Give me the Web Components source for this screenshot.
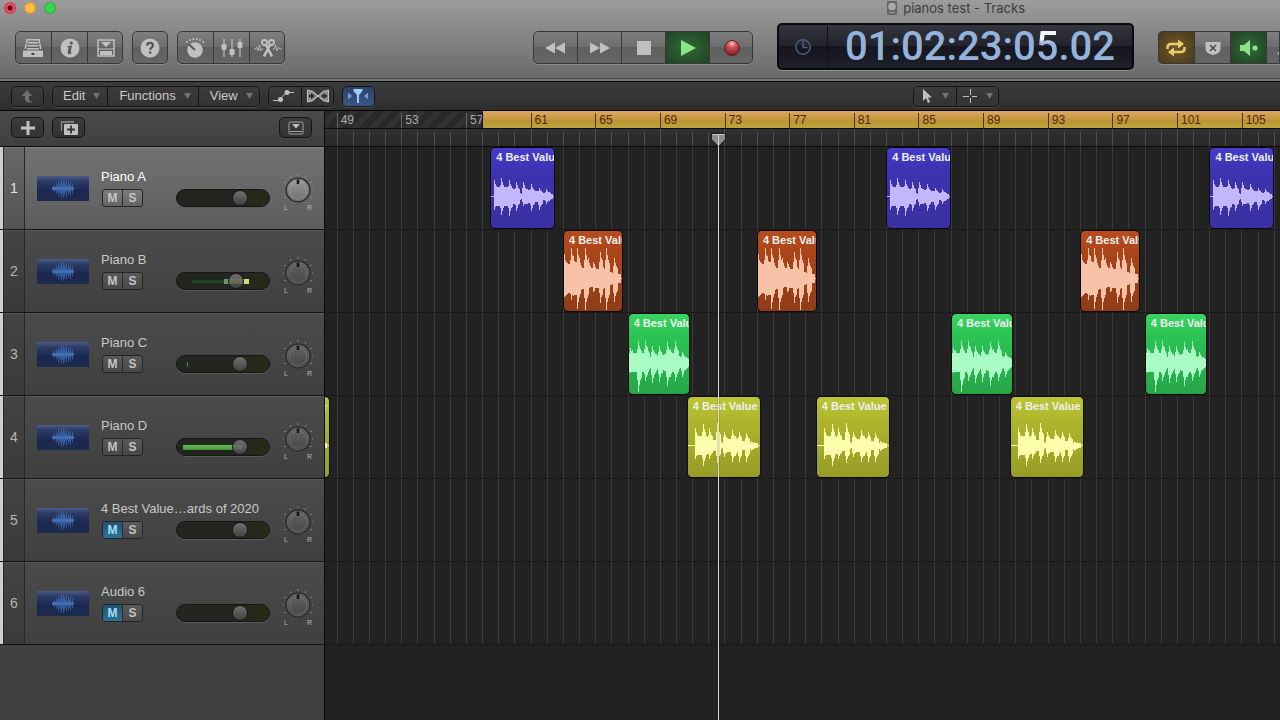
<!DOCTYPE html>
<html lang="en">
<head>
<meta charset="utf-8">
<meta name="viewport" content="width=device-width, initial-scale=1">
<title>pianos test - Tracks</title>
<style>
  html, body {
    margin: 0;
    height: 100%;
    background: #222;
    overflow: hidden;
  }
</style>
</head>
<body>
<daw-window></daw-window>

<script>
const ICONS = {
  library: [22, 20, `<path fill="currentColor" d="M4 1h14v1.500H4zM4 2h1.500v3H4zM16.500 2H18v3h-1.500zM6 4h10v1.500H6zM3.500 5.500H5L4 11H2.500zM17 5.500h1.500l1 5.500H18zM5.500 7h11v1.500h-11zM5 10h12v1.500H5zM1 12.500h20V19H1z"/><path fill="#4a4a4a" d="M9.500 15h3v2h-3z"/>`],
  info: [20, 20, `<circle cx="10" cy="10" r="9.5" fill="currentColor"/><circle cx="11.3" cy="5" r="1.6" fill="#555"/><path fill="#555" d="M7 8.2 12 7.6 10.6 14q-.2 1 .9.2l.5.5q-3.7 3-4.4.2l1.1-5.3q0-.7-1.6-.6z"/>`],
  inbox: [20, 20, `<path fill="none" stroke="currentColor" stroke-width="1.500" d="M2 2h16v16H2z"/><path fill="currentColor" d="M5 4h10l-5 5zM4 13h12v4H4z"/><path stroke="currentColor" stroke-width="1.200" d="M2 11h16"/>`],
  help: [20, 20, `<circle cx="10" cy="10" r="9.500" fill="currentColor"/><path fill="none" stroke="#555" stroke-width="2.200" d="M7 7.600q.2-2.800 3-2.800 3 0 3 2.400 0 1.400-1.500 2.300Q10.200 10.300 10.200 12"/><path fill="#555" d="M9 13.500h2.400v2.300H9z"/>`],
  dial: [22, 22, `<circle cx="11" cy="13" r="7.800" fill="currentColor"/><path stroke="#555" stroke-width="1.800" d="m5 7.500 6 5.500"/><g fill="currentColor"><circle cx="3" cy="5" r="1"/><circle cx="6" cy="3" r="1"/><circle cx="9.300" cy="2" r="1"/><circle cx="12.700" cy="2" r="1"/><circle cx="16" cy="3" r="1"/><circle cx="19" cy="5" r="1"/></g>`],
  mixer: [22, 20, `<path stroke="currentColor" stroke-width="1.200" d="M3 1v18M11 1v18M19 1v18"/><g fill="currentColor"><rect x=".5" y="6" width="5" height="6" rx="1"/><rect x="8.500" y="11" width="5" height="6" rx="1"/><rect x="16.500" y="4" width="5" height="6" rx="1"/></g>`],
  scissors: [30, 20, `<g fill="none" stroke="currentColor"><g stroke-width="1.800"><circle cx="11.500" cy="4.500" r="2.500"/><circle cx="18.500" cy="4.500" r="2.500"/></g><path stroke-width="2.600" d="m12.800 6.500 6.200 12M17.200 6.500l-6.200 12"/><path stroke-width=".9" d="M1 11h1.500l1-2 1.500 4L6.500 7l1 6 1-2h2M19.500 11h2l1-4 1.500 6 1.500-4 1 2H29"/></g>`],
  rewind: [22, 14, `<path fill="currentColor" d="M11 1.500v11L1 7zM21 1.500v11L11 7z"/>`],
  forward: [22, 14, `<path fill="currentColor" d="M1 1.500v11L11 7zM11 1.500v11L21 7z"/>`],
  stop: [14, 14, `<path fill="currentColor" d="M0 0h14v14H0z"/>`],
  play: [16, 16, `<path fill="currentColor" d="M1 0v16l15-8z"/>`],
  record: [18, 18, `<defs><radialGradient id="r" cx=".5" cy=".2" r=".8"><stop stop-color="#ffc4c4"/><stop offset=".35" stop-color="#cc545c"/><stop offset="1" stop-color="#7c1a22"/></radialGradient></defs><circle cx="9" cy="9" r="7.500" fill="url(#r)" stroke="#5a2226"/>`],
  cycle: [24, 20, `<g fill="none" stroke="currentColor" stroke-width="2.400"><path d="M3.500 11V9.500Q3.500 6 7 6h8M20.500 9v1.500q0 3.500-3.500 3.500H9"/></g><path fill="currentColor" d="m14 1.500 6 4.500-6 4.500zM10 9.500 4 14l6 4.500z"/>`],
  replace: [18, 16, `<path fill="currentColor" d="M1.500 2h15v7q0 4-7.500 6-7.500-2-7.500-6z"/><path stroke="#4a4a4a" stroke-width="1.600" d="m6 5 6 6m0-6-6 6"/>`],
  speaker: [20, 18, `<path fill="currentColor" d="M1 6h4l6-5v16l-6-5H1z"/><circle cx="16" cy="9" r="2.600" fill="currentColor"/>`],
  tuner: [18, 18, `<path stroke="currentColor" stroke-width="2" fill="none" d="m2 15 8-8 2 4 4-6"/>`],
  clock: [18, 18, `<g fill="none" stroke="currentColor" stroke-width="1.500"><circle cx="9" cy="9" r="7.200"/><path d="M9 3v6.500h4.500"/></g>`],
  up: [14, 14, `<path fill="currentColor" d="m6 1 5 6H8v3q0 2 3 2.500v1Q4 14 4 10V7H1z"/>`],
  automation: [24, 16, `<g fill="none" stroke="currentColor"><path d="M1 12.500h6M17 4.500h5M7 12l8-8"/></g><circle cx="8.500" cy="11.500" r="2.500" fill="currentColor"/><circle cx="15" cy="4.500" r="2.500" fill="currentColor"/>`],
  flex: [24, 16, `<path fill="#8f8f8f" d="M1 2q6 0 11 6-5 6-11 6zM23 2q-6 0-11 6 5 6 11 6z"/><path fill="none" stroke="currentColor" d="M1.500 2q6 0 10.500 6 4.500 6 10.500 6V2Q16.500 2 12 8q-4.500 6-10.500 6z"/><path fill="#2c2c2c" d="M3 6.500h1v3H3zM5 5l4 3-4 3V9H4V7h1zM20 6.500h1v3h-1zM19 5l-4 3 4 3V9h1V7h-1z"/>`],
  catch: [22, 16, `<path fill="#9ecbff" d="M6.500 1h9v2L12 7v8h-2V7L6.500 3z"/><path fill="#7399d6" d="m1 4.500 4 3.500-4 3.500zM21 4.500 17 8l4 3.500z"/>`],
  pointer: [12, 16, `<path fill="currentColor" d="M2 1v12l3-3 2 5 2.200-1L7 9.500h4z"/>`],
  cross: [14, 14, `<path stroke="currentColor" d="M7.500 0v6M7.500 9v5M0 7.500h6M9 7.500h5"/>`],
  plus: [14, 14, `<path fill="currentColor" d="M5.500 0h3v5.500H14v3H8.500V14h-3V8.500H0v-3h5.500z"/>`],
  duplicate: [20, 16, `<path fill="none" stroke="#909090" stroke-width="1.300" d="M2.500 11V2H15"/><rect x="5" y="4" width="14" height="11" rx="1" fill="currentColor"/><path stroke="#333" stroke-width="1.800" d="M12 5.500v8M8 9.500h8"/>`],
  panel: [16, 14, `<rect x="1" y="1" width="14" height="12" rx="1" fill="none" stroke="#a0a0a0"/><path fill="currentColor" d="M4 3h8L8 7.500z"/><path stroke="#a0a0a0" d="M2 10.500h12"/>`],
  document: [12, 16, `<rect x="1" y="1" width="10" height="14" rx="1" fill="#666"/><circle cx="6" cy="6.500" r="3.800" fill="#a8a8a8"/><path stroke="#999" d="M3 12.500h6"/>`],
  arrow: [7, 8, `<path fill="currentColor" d="M0 1h7L3.500 7z"/>`],
};

function icon(name) {
  const [w, h, body] = ICONS[name];
  return `<svg width="${w}" height="${h}" viewBox="0 0 ${w} ${h}" aria-hidden="true">${body}</svg>`;
}

// the part of the song that is in view, counted in bars
const VIEW = { start: 48.276, length: 59.086 };
const percent = (bars) => `${(bars / VIEW.length) * 100}%`;
const barToX = (bar) => percent(bar - VIEW.start);

const SOUNDS = {
  blue: {
    length: 4, mid: 48, width: 64,
    body: [[0, 0], [2, 0], [3, 9], [12, 9], [20, 8], [28, 5], [32, 1], [34, 7], [46, 5], [55, 3], [63, 0]],
    peaks: [[3, 16, 13], [10, 18, 18], [18, 16, 19], [26, 14, 14], [33, 14, 9], [41, 12, 14], [49, 8, 13], [56, 7, 7], [60, 3, 3]],
  },
  orange: {
    length: 3.7, mid: 47, width: 60,
    body: [[0, 18], [4, 14], [12, 16], [18, 10], [28, 8], [34, 9], [42, 9], [50, 5], [59, 4]],
    peaks: [[0, 24, 18], [7, 30, 21], [9, 22, 17], [14, 30, 30], [16, 20, 18], [22, 30, 31], [25, 20, 12], [30, 16, 13], [31, 14, 12], [37, 26, 24], [39, 18, 16], [44, 30, 31], [52, 20, 23]],
  },
  green: {
    length: 3.87, mid: 48, width: 62,
    body: [[0, 9], [8, 9], [18, 9], [23, 4], [28, 3], [34, 7], [42, 9], [48, 8], [54, 3], [61, 2]],
    peaks: [[1, 14, 10], [3, 12, 9], [9, 21, 29], [16, 21, 18], [18, 15, 12], [24, 16, 20], [28, 8, 8], [31, 16, 19], [39, 20, 23], [42, 13, 14], [47, 21, 18], [54, 10, 14], [58, 5, 6]],
  },
  yellow: {
    length: 4.58, mid: 48, width: 74,
    body: [[0, 0], [6, 0], [7, 9], [18, 9], [27, 5], [33, 3], [36, 2], [40, 6], [50, 6], [57, 4], [62, 2], [72, 0]],
    peaks: [[7, 17, 13], [15, 21, 20], [22, 17, 13], [30, 22, 17], [37, 13, 11], [45, 15, 16], [48, 9, 10], [52, 13, 16], [60, 12, 16], [65, 4, 5], [68, 3, 3]],
  },
};

function wavePath({ body, peaks, mid, width }) {
  const fade = { "-1": 0.6, 0: 1, 1: 0.75, 2: 0.6, 3: 0.5 };
  const level = (x, side) => {
    const next = Math.max(1, body.findIndex(([bx]) => bx >= x));
    const [x0, y0] = body[next - 1];
    const [x1, y1] = body[next];
    const base = y0 + ((y1 - y0) * (x - x0)) / (x1 - x0);
    if (base <= 0) return 0;
    const spikes = peaks.map((p) => (fade[x - p[0]] || 0) * p[side]);
    return Math.round(Math.max(base, ...spikes));
  };
  let d = "";
  for (let x = 0; x < body[body.length - 1][0]; x++) {
    const up = level(x, 1);
    const down = level(x, 2);
    d += `M${x} ${mid - up}h1v${up + down + 1}h-1z`;
  }
  return `${d}M0 ${mid}h${width}v1H0z`;
}

class IconButton extends HTMLElement {
  constructor() {
    super();
    this.attachShadow({ mode: "open" });
  }

  static get styles() {
    return /* css */`
      :host {
        display: flex;
        box-sizing: border-box;
        width: var(--button-width, 36px);
        flex: none;
        color: var(--icon-color, #c0c0c0);
      }

      :host([tone="green"]) {
        color: #8be584;
        --face: radial-gradient(#326a38, #1f4023);
      }

      :host([tone="gold"]) {
        color: #f0cd69;
        --face: radial-gradient(#70592a, #46381b);
      }

      :host([tone="blue"]) {
        --face: linear-gradient(#2b4266, #3b5785);
      }

      :host([dim]) {
        color: #707070;
      }

      button {
        display: flex;
        align-items: center;
        justify-content: center;
        flex: 1;
        min-width: 0;
        padding: 0;
        border: 0;
        color: inherit;
        background: var(--face, none);
      }

      svg {
        flex: none;
      }
    `;
  }

  connectedCallback() {
    const more = this.hasAttribute("menu") ? `<svg width="16" height="8" viewBox="-9 0 16 8"><path fill="#727272" d="M0 1h7L3.500 7z"/></svg>` : "";
    this.shadowRoot.innerHTML = /* html */`
    <style>${IconButton.styles}</style>
    <button type="button" aria-label="${this.getAttribute("label")}">${icon(this.getAttribute("icon"))}${more}</button>`;
  }
}

customElements.define("icon-button", IconButton);

class MenuButton extends HTMLElement {
  constructor() {
    super();
    this.attachShadow({ mode: "open" });
  }

  connectedCallback() {
    this.shadowRoot.innerHTML = /* html */`
    <style>
      :host {
        display: flex;
      }

      button {
        display: flex;
        align-items: center;
        gap: 8px;
        padding: 0 7px 0 11px;
        border: 0;
        background: none;
        color: #cacaca;
        font: 13px/18px "Liberation Sans", Arial, sans-serif;
      }

      svg {
        color: #727272;
      }
    </style>
    <button type="button"><slot></slot>${icon("arrow")}</button>`;
  }
}

customElements.define("menu-button", MenuButton);

class ControlGroup extends HTMLElement {
  constructor() {
    super();
    this.attachShadow({ mode: "open" });
  }

  connectedCallback() {
    this.shadowRoot.innerHTML = /* html */`
    <style>
      :host {
        display: flex;
        position: relative;
        flex: none;
        box-sizing: border-box;
        height: 33px;
        border-radius: 5px;
        overflow: hidden;
        background: linear-gradient(#808080, #6c6c6c 50%, #606060 50%, #666);
        box-shadow: 0 1px 0 #8a8a8a;
        --divider: #383838;
      }

      /* the frame is drawn over the faces of the buttons */
      :host::after {
        content: "";
        position: absolute;
        inset: 0;
        border: 1px solid var(--divider);
        border-radius: inherit;
        pointer-events: none;
      }

      :host([small]) {
        height: 21px;
        background: linear-gradient(#3c3c3c, #323232);
        box-shadow: 0 1px 0 #4a4a4a;
        --divider: #151515;
      }

      ::slotted(:not(:first-child)) {
        border-left: 1px solid var(--divider);
      }
    </style>
    <slot></slot>`;
  }
}

customElements.define("control-group", ControlGroup);

class TitleBar extends HTMLElement {
  constructor() {
    super();
    this.attachShadow({ mode: "open" });
  }

  connectedCallback() {
    this.shadowRoot.innerHTML = /* html */`
    <style>
      :host {
        display: flex;
        align-items: center;
        gap: 8px;
        height: 16px;
        padding: 0 255px 0 4px;
        color: #3c3c3c;
        font: 13px/16px Inter, Roboto, sans-serif;
      }

      button {
        box-sizing: border-box;
        width: 12px;
        height: 12px;
        padding: 0;
        border: 1px solid #00000030;
        border-radius: 50%;
        background: var(--light);
      }

      h1 {
        display: flex;
        align-items: center;
        gap: 5px;
        margin: 0 0 0 auto;
        font: inherit;
      }
    </style>
    <button type="button" aria-label="Close" style="--light: radial-gradient(#4d0d12 2px, #ee4b5a 3px)"></button>
    <button type="button" aria-label="Minimise" style="--light: #fdbc40"></button>
    <button type="button" aria-label="Zoom" style="--light: #35d74b"></button>
    <h1>${icon("document")}<slot></slot></h1>`;
  }
}

customElements.define("title-bar", TitleBar);

class LcdDisplay extends HTMLElement {
  constructor() {
    super();
    this.attachShadow({ mode: "open" });
  }

  static get styles() {
    return /* css */`
      :host {
        display: flex;
        flex: none;
        box-sizing: border-box;
        width: 357px;
        height: 47px;
        border: 2px solid #0a0a0c;
        border-radius: 5px;
        background: linear-gradient(#35353d, #22222c 50%, #15151e 50%, #20202a);
        box-shadow: 0 1px 0 #909090;
      }

      .mode {
        display: flex;
        align-items: center;
        justify-content: center;
        width: 49px;
        padding: 0;
        border: 0;
        border-right: 1px solid #12121a;
        background: none;
        color: #476082;
      }

      time {
        flex: 1;
        color: #93b3dc;
        text-align: center;
        font: 500 40px/44px Roboto, "Liberation Sans", sans-serif;
      }

      .fresh {
        color: transparent;
        background: linear-gradient(#f2f8ff 16px, #93b3dc 20px);
        background-clip: text;
      }
    `;
  }

  connectedCallback() {
    this.shadowRoot.innerHTML = /* html */`
    <style>${LcdDisplay.styles}</style>
    <button class="mode" type="button" aria-label="Display mode">${icon("clock")}</button>
    <time>01:02:23:0<span class="fresh">5</span>.02</time>`;
  }
}

customElements.define("lcd-display", LcdDisplay);

class VolumeFader extends HTMLElement {
  constructor() {
    super();
    this.attachShadow({ mode: "open" });
  }

  static get styles() {
    return /* css */`
      :host {
        display: flex;
        --track: linear-gradient(90deg, #232521 60%, #2b2a18);
      }

      input {
        appearance: none;
        box-sizing: border-box;
        width: 94px;
        height: 18px;
        margin: 0;
        padding: 0 1px;
        border: 1px solid #161616;
        border-radius: 9px;
        background: var(--track);
        box-shadow: 0 1px 0 #5a5a5a;
      }

      :host([meter="high"]) input {
        background:
          linear-gradient(90deg, #6f9468 4px, #7c8f4c 4px 20px, #d4dd66 20px) 47px 6px / 25px 5px no-repeat,
          linear-gradient(#1c4a22, #1c4a22) 15px 7px / 34px 3px no-repeat,
          var(--track);
      }

      :host([meter="mid"]) input {
        background:
          linear-gradient(#63bb52, #45953c) 6px 6px / 60px 5px no-repeat,
          var(--track);
      }

      :host([meter="low"]) input {
        background:
          linear-gradient(#3f8a3c, #3f8a3c) 10px 6px / 1px 5px no-repeat,
          var(--track);
      }

      input::-webkit-slider-thumb {
        appearance: none;
        box-sizing: border-box;
        width: 16px;
        height: 16px;
        border: 1px solid #1b1b1b;
        border-radius: 50%;
        background: linear-gradient(#808080d0, #484848d0);
      }
    `;
  }

  connectedCallback() {
    this.shadowRoot.innerHTML = /* html */`
    <style>${VolumeFader.styles}</style>
    <input type="range" aria-label="Volume" value="${this.getAttribute("value")}">`;
  }
}

customElements.define("volume-fader", VolumeFader);

class PanKnob extends HTMLElement {
  constructor() {
    super();
    this.attachShadow({ mode: "open" });
  }

  connectedCallback() {
    let dots = "";
    for (let angle = -120; angle <= 120; angle += 30) {
      dots += `<circle cx="15" cy="1" r=".7" fill="#a0a0a0" transform="rotate(${angle} 15 16)"/>`;
    }
    this.shadowRoot.innerHTML = /* html */`
    <style>
      :host {
        display: grid;
        width: 30px;
        padding-top: 8px;
        --top: #636363;
        --bottom: #474747;
      }

      :host([lit]) {
        --top: #999;
        --bottom: #6f6f6f;
      }

      svg, input {
        grid-area: 1 / 1;
      }

      input {
        width: 30px;
        height: 30px;
        margin: 0;
        opacity: 0;
      }

      .ends {
        display: flex;
        justify-content: space-between;
        color: #b8b8b8;
        padding: 0 1px;
        font: 7px/5px "Liberation Sans", Arial, sans-serif;
      }
    </style>
    <svg width="30" height="31" viewBox="0 0 30 31">
      <defs><linearGradient id="k" x2="0" y2="1"><stop stop-color="var(--top)"/><stop offset="1" stop-color="var(--bottom)"/></linearGradient></defs>
      ${dots}
      <circle cx="15" cy="16" r="12.500" fill="#262626"/>
      <circle cx="15" cy="16" r="11" fill="url(#k)" stroke="#777" stroke-width=".6"/>
      <circle cx="15" cy="16.500" r="8.500" fill="none" stroke="#ffffff20"/>
      <path stroke="#151515" stroke-width="2.600" d="M15 5.500v4.500"/>
    </svg>
    <input type="range" aria-label="Pan" min="-64" max="63" value="0">
    <div class="ends"><span>L</span><span>R</span></div>`;
  }
}

customElements.define("pan-knob", PanKnob);

class TrackHeader extends HTMLElement {
  constructor() {
    super();
    this.attachShadow({ mode: "open" });
  }

  static get styles() {
    return /* css */`
      :host {
        display: flex;
        box-sizing: border-box;
        height: 83px;
        border-bottom: 1px solid #141414;
        background: linear-gradient(#585858 1px, #4b4b4b 1px, #404040);
        color: #c8c8c8;
        font: 13px/16px "Liberation Sans", Arial, sans-serif;
      }

      :host([selected]) {
        background: linear-gradient(#808080 1px, #727272 1px, #5d5d5d);
        color: #fff;
      }

      .number {
        display: flex;
        align-items: center;
        justify-content: center;
        box-sizing: border-box;
        width: 25px;
        border: solid #272727;
        border-width: 0 1px 0 0;
        background: linear-gradient(90deg, #cfcfcf 3px, #272727 3px 4px, #00000018 4px);
        padding-left: 4px;
        color: #b5b5b5;
        font-size: 14px;
      }

      :host([selected]) .number {
        color: #e4e4e4;
      }

      .body {
        display: grid;
        grid-template-columns: 52px 1fr 30px;
        gap: 12px;
        flex: 1;
        align-items: center;
        padding: 0 11px 0 12px;
      }

      .wave {
        width: 52px;
        height: 25px;
        background: linear-gradient(#4c5d88, #2b3c68 20%, #1a2850 60%, #1d2b4e);
        color: #4678c2;
      }

      .settings {
        display: flex;
        flex-wrap: wrap;
        justify-content: space-between;
        row-gap: 4px;
        padding-right: 1px;
      }

      .name {
        flex: 1 0 100%;
        white-space: nowrap;
      }

      .switches {
        display: flex;
        box-sizing: border-box;
        width: 41px;
        height: 18px;
        margin-left: 1px;
        border: 1px solid #242424;
        border-radius: 3px;
        overflow: hidden;
        background: linear-gradient(#5a5a5a, #484848);
      }

      :host([selected]) .switches {
        background: linear-gradient(#7c7c7c, #646464);
      }

      .switches button {
        flex: 1;
        padding: 0;
        border: 0;
        background: none;
        color: #c4c4c4;
        font: bold 12px/16px "Liberation Sans", Arial, sans-serif;
      }

      .switches button + button {
        border-left: 1px solid #2c2c2c;
      }

      .switches button[aria-pressed="true"] {
        background: linear-gradient(#1d5472, #2b7396);
        color: #a8dcf8;
      }
    `;
  }

  connectedCallback() {
    const levels = [1, 2, 4, 2, 5, 3, 8, 4, 6, 9, 5, 9, 7, 4, 8, 3, 6, 4, 7, 2, 5, 1];
    const lines = levels.map((v, i) => `M${i + 15.500} ${12.500 - v}v${v * 2}`).join("");
    this.shadowRoot.innerHTML = /* html */`
    <style>${TrackHeader.styles}</style>
    <div class="number">${this.getAttribute("number")}</div>
    <div class="body">
      <svg class="wave" viewBox="0 0 52 25"><path stroke="currentColor" stroke-width=".6" d="${lines}"/><path stroke="currentColor" stroke-width="3" opacity=".7" d="M15 12.500h22"/></svg>
      <div class="settings">
        <div class="name"><slot></slot></div>
        <div class="switches">
          <button type="button" aria-pressed="${this.hasAttribute("muted")}">M</button>
          <button type="button" aria-pressed="false">S</button>
        </div>
        <volume-fader value="${this.getAttribute("volume")}" meter="${this.getAttribute("meter") || ""}"></volume-fader>
      </div>
      <pan-knob ${this.hasAttribute("selected") ? "lit" : ""}></pan-knob>
    </div>`;
  }
}

customElements.define("track-header", TrackHeader);

class TimeRuler extends HTMLElement {
  constructor() {
    super();
    this.attachShadow({ mode: "open" });
  }

  static get styles() {
    return /* css */`
      :host {
        display: block;
      }

      .bars, .beats {
        display: flex;
        box-sizing: border-box;
        height: 18px;
        overflow: hidden;
        border-bottom: 1px solid #0c0c0c;
      }

      .lead {
        flex: 0 0 ${barToX(49)};
      }

      .bars {
        position: relative;
        background: repeating-linear-gradient(135deg, #292929 0 6px, #323232 6px 12px);
        color: #aaa;
        font: 12px/15px "Liberation Sans", Arial, sans-serif;
      }

      .cycle {
        position: absolute;
        top: 0;
        bottom: 0;
        left: ${barToX(58)};
        right: 0;
        border-left: 1px solid #0c0c0c;
        background: linear-gradient(#dba765, #c79a3f 45%, #bf9336 55%, #bda43b);
      }

      .bars span {
        flex: 0 0 ${percent(4)};
        box-sizing: border-box;
        margin-top: 2px;
        padding-left: 3px;
        border-left: 1px solid #666;
      }

      .bars .inside {
        position: relative;
        color: #4a2b0c;
        border-color: #4f3510;
      }

      .beats {
        background: linear-gradient(#303030, #292929);
      }

      .beats i {
        flex: 0 0 ${percent(1)};
        box-sizing: border-box;
        margin-top: 3px;
        border-left: 1px solid #505050;
      }

      .beats i:nth-of-type(4n + 1) {
        margin-top: 0;
      }
    `;
  }

  connectedCallback() {
    let bars = "";
    for (let bar = 49; bar < VIEW.start + VIEW.length; bar += 4) {
      bars += `<span class="${bar > 58 ? "inside" : ""}">${bar}</span>`;
      if (bar === 57) bars += `<div class="cycle"></div>`;
    }
    this.shadowRoot.innerHTML = /* html */`
    <style>${TimeRuler.styles}</style>
    <div class="bars"><div class="lead"></div>${bars}</div>
    <div class="beats"><div class="lead"></div>${"<i></i>".repeat(59)}</div>`;
  }
}

customElements.define("time-ruler", TimeRuler);

class AudioRegion extends HTMLElement {
  constructor() {
    super();
    this.attachShadow({ mode: "open" });
  }

  static get styles() {
    return /* css */`
      :host {
        position: absolute;
        top: 0;
        bottom: 0;
        box-sizing: border-box;
        border: 1px solid #0b0b0b;
        border-radius: 5px;
        overflow: hidden;
        color: #f0f0f0;
        font: bold 11px/14px "Liberation Sans", Arial, sans-serif;
        background: var(--fill);
      }

      :host([color="blue"]) {
        --fill: linear-gradient(#443cca, #3b33b0 30%, #3a30a2);
        --wave: #c1b7fa;
      }

      :host([color="orange"]) {
        --fill: linear-gradient(#b94c1e, #a84419 30%, #8e3c18);
        --wave: #f7c2a8;
      }

      :host([color="green"]) {
        --fill: linear-gradient(#36d660, #2bc253 30%, #27a648);
        --wave: #a9fcc4;
      }

      :host([color="yellow"]) {
        --fill: linear-gradient(#bcc634, #aeb52c 30%, #979c27);
        --wave: #fdffac;
      }

      .content {
        display: grid;
      }

      .name, svg {
        grid-area: 1 / 1;
      }

      .name {
        margin: 2px 0 0 5px;
        overflow: hidden;
        white-space: nowrap;
      }

      svg {
        width: 100%;
        height: 80px;
        fill: var(--wave);
      }
    `;
  }

  connectedCallback() {
    const sound = SOUNDS[this.getAttribute("color")];
    this.style.left = barToX(Number(this.getAttribute("start")));
    this.style.width = percent(sound.length);
    this.shadowRoot.innerHTML = /* html */`
    <style>${AudioRegion.styles}</style>
    <div class="content">
      <svg viewBox="0 0 ${sound.width} 80" preserveAspectRatio="none" shape-rendering="crispEdges" aria-hidden="true"><path d="${wavePath(sound)}"/></svg>
      <div class="name"><slot></slot></div>
    </div>`;
  }
}

customElements.define("audio-region", AudioRegion);

class TrackLane extends HTMLElement {
  constructor() {
    super();
    this.attachShadow({ mode: "open" });
  }

  connectedCallback() {
    this.shadowRoot.innerHTML = /* html */`
    <style>
      :host {
        display: block;
        position: relative;
        box-sizing: border-box;
        height: 83px;
        overflow: hidden;
        border-bottom: 1px solid #1a1a1a;
      }
    </style>
    <slot></slot>`;
  }
}

customElements.define("track-lane", TrackLane);

class TrackArea extends HTMLElement {
  constructor() {
    super();
    this.attachShadow({ mode: "open" });
  }

  static get styles() {
    return /* css */`
      :host {
        display: block;
        position: relative;
        min-width: 0;
        overflow: hidden;
        background: #222;
      }

      .lanes {
        display: grid;
      }

      .grid, .rows {
        grid-area: 1 / 1;
        min-width: 0;
      }

      .grid {
        display: flex;
        overflow: hidden;
      }

      .lead {
        flex: 0 0 ${barToX(49)};
      }

      .grid i {
        flex: 0 0 ${percent(1)};
        box-sizing: border-box;
        border-left: 1px solid #3a3a3a;
      }

      /* the playhead lies over the ruler and every lane */
      .playhead {
        position: absolute;
        top: 22px;
        bottom: 0;
        left: ${barToX(72.600)};
        width: 15px;
        margin-left: -7px;
        display: flex;
        flex-direction: column;
        align-items: center;
      }

      .playhead svg {
        flex: none;
      }

      .playhead::after {
        content: "";
        flex: 1;
        width: 1px;
        background: #dcdcdc;
        box-shadow: 0 0 1px #000;
      }
    `;
  }

  connectedCallback() {
    this.shadowRoot.innerHTML = /* html */`
    <style>${TrackArea.styles}</style>
    <time-ruler></time-ruler>
    <div class="lanes">
      <div class="grid"><div class="lead"></div>${"<i></i>".repeat(59)}</div>
      <div class="rows"><slot></slot></div>
    </div>
    <div class="playhead">
      <svg width="15" height="14" viewBox="0 0 15 14"><path fill="#8c8c8c" stroke="#1a1a1a" d="M.5.500h14v6l-7 7-7-7z"/><path stroke="#d0d0d0" d="M1.500 1.500h12M7.500 2v12"/></svg>
    </div>`;
  }
}

customElements.define("track-area", TrackArea);

class DawWindow extends HTMLElement {
  constructor() {
    super();
    this.attachShadow({ mode: "open" });
  }

  static get styles() {
    return /* css */`
      :host {
        display: flex;
        flex-direction: column;
        height: 100vh;
        overflow: hidden;
      }

      header {
        background: linear-gradient(#9c9c9c, #686868);
        border-bottom: 1px solid #060606;
        box-shadow: inset 0 -2px 0 #757575, inset 0 -3px 0 #484848;
      }

      .toolbar {
        display: flex;
        align-items: center;
        gap: 9px;
        height: 63px;
        padding: 0 0 2px 15px;
      }

      .transport {
        --button-width: 44px;
        margin-left: auto;
      }

      lcd-display {
        margin: 0 15px 2px;
      }

      .modes {
        width: 122px;
        border-radius: 5px 0 0 5px;
      }

      nav {
        display: flex;
        align-items: center;
        gap: 8px;
        height: 28px;
        padding: 0 281px 0 11px;
        border-bottom: 1px solid #050505;
        background: linear-gradient(#3c3c3c, #2d2d2d);
        --button-width: 33px;
      }

      .tools {
        --button-width: 43px;
        margin-left: auto;
      }

      main {
        display: grid;
        grid-template-columns: 325px 1fr;
        flex: 1;
        min-height: 0;
      }

      aside {
        border-right: 1px solid #0a0a0a;
        background: #404040;
      }

      .add {
        display: flex;
        align-items: center;
        gap: 8px;
        box-sizing: border-box;
        height: 36px;
        padding: 0 12px 2px 11px;
        border-bottom: 1px solid #101010;
        background: linear-gradient(#4b4b4b, #3f3f3f);
        --button-width: 33px;
      }

      .add :last-child {
        margin-left: auto;
      }
    `;
  }

  render() {
    const regions = [
      ["blue", 58.500, 83, 103],
      ["orange", 63, 75, 95],
      ["green", 67, 87, 99],
      ["yellow", 43.980, 70.660, 78.640, 90.640],
      [],
      [],
    ];
    const lanes = regions.map(([color, ...starts]) => `<track-lane>${starts
      .map((start) => `<audio-region color="${color}" start="${start}">4 Best Value</audio-region>`)
      .join("")}</track-lane>`).join("");

    this.shadowRoot.innerHTML = /* html */`
    <style>${DawWindow.styles}</style>
    <header>
      <title-bar>pianos test - Tracks</title-bar>
      <div class="toolbar">
        <control-group>
          <icon-button icon="library" label="Library"></icon-button>
          <icon-button icon="info" label="Inspector"></icon-button>
          <icon-button icon="inbox" label="Toolbar"></icon-button>
        </control-group>
        <control-group>
          <icon-button icon="help" label="Quick Help"></icon-button>
        </control-group>
        <control-group>
          <icon-button icon="dial" label="Smart Controls"></icon-button>
          <icon-button icon="mixer" label="Mixer"></icon-button>
          <icon-button icon="scissors" label="Editors"></icon-button>
        </control-group>
        <control-group class="transport">
          <icon-button icon="rewind" label="Rewind"></icon-button>
          <icon-button icon="forward" label="Forward"></icon-button>
          <icon-button icon="stop" label="Stop"></icon-button>
          <icon-button icon="play" label="Play" tone="green"></icon-button>
          <icon-button icon="record" label="Record"></icon-button>
        </control-group>
        <lcd-display></lcd-display>
        <control-group class="modes">
          <icon-button icon="cycle" label="Cycle" tone="gold"></icon-button>
          <icon-button icon="replace" label="Replace"></icon-button>
          <icon-button icon="speaker" label="Input Monitoring" tone="green"></icon-button>
          <icon-button icon="tuner" label="Tuner"></icon-button>
        </control-group>
      </div>
    </header>
    <nav>
      <control-group small><icon-button icon="up" label="Up" dim></icon-button></control-group>
      <control-group small>
        <menu-button>Edit</menu-button>
        <menu-button>Functions</menu-button>
        <menu-button>View</menu-button>
      </control-group>
      <control-group small>
        <icon-button icon="automation" label="Automation"></icon-button>
        <icon-button icon="flex" label="Flex"></icon-button>
      </control-group>
      <control-group small><icon-button icon="catch" label="Catch Playhead" tone="blue"></icon-button></control-group>
      <control-group small class="tools">
        <icon-button icon="pointer" label="Pointer tool" menu></icon-button>
        <icon-button icon="cross" label="Marquee tool" menu></icon-button>
      </control-group>
    </nav>
    <main>
      <aside>
        <div class="add">
          <control-group small><icon-button icon="plus" label="New track"></icon-button></control-group>
          <control-group small><icon-button icon="duplicate" label="Duplicate track"></icon-button></control-group>
          <control-group small><icon-button icon="panel" label="Global tracks"></icon-button></control-group>
        </div>
        <track-header number="1" volume="73" selected>Piano A</track-header>
        <track-header number="2" volume="67" meter="high">Piano B</track-header>
        <track-header number="3" volume="73" meter="low">Piano C</track-header>
        <track-header number="4" volume="73" meter="mid">Piano D</track-header>
        <track-header number="5" volume="73" muted>4 Best Value…ards of 2020</track-header>
        <track-header number="6" volume="73" muted>Audio 6</track-header>
      </aside>
      <track-area>${lanes}</track-area>
    </main>`;
  }

  connectedCallback() {
    this.render();
  }
}

customElements.define("daw-window", DawWindow);
</script>
</body>
</html>
